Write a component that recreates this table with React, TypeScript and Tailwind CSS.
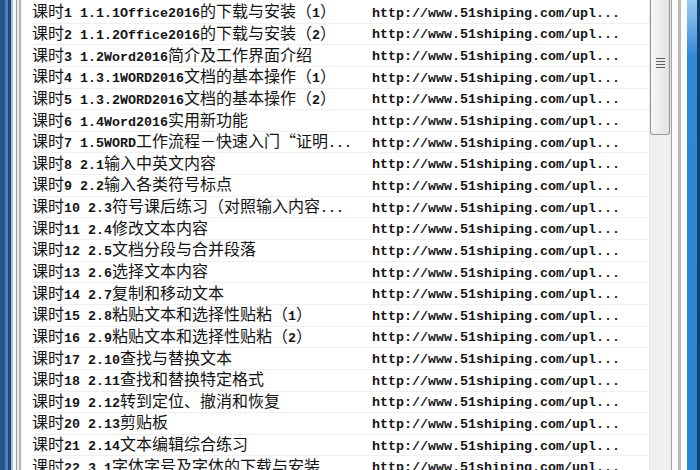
import React from 'react';

const URL = 'http://www.51shiping.com/upl...';

const lessons: string[] = [
  '课时1 1.1.1Office2016的下载与安装（1）',
  '课时2 1.1.2Office2016的下载与安装（2）',
  '课时3 1.2Word2016简介及工作界面介绍',
  '课时4 1.3.1WORD2016文档的基本操作（1）',
  '课时5 1.3.2WORD2016文档的基本操作（2）',
  '课时6 1.4Word2016实用新功能',
  '课时7 1.5WORD工作流程－快速入门“证明...',
  '课时8 2.1输入中英文内容',
  '课时9 2.2输入各类符号标点',
  '课时10 2.3符号课后练习（对照输入内容...',
  '课时11 2.4修改文本内容',
  '课时12 2.5文档分段与合并段落',
  '课时13 2.6选择文本内容',
  '课时14 2.7复制和移动文本',
  '课时15 2.8粘贴文本和选择性贴粘（1）',
  '课时16 2.9粘贴文本和选择性贴粘（2）',
  '课时17 2.10查找与替换文本',
  '课时18 2.11查找和替换特定格式',
  '课时19 2.12转到定位、撤消和恢复',
  '课时20 2.13剪贴板',
  '课时21 2.14文本编辑综合练习',
  '课时22 3.1字体字号及字体的下载与安装',
];

// SimSun-ish: half width latin (8px), full width CJK (16px)
const Mixed: React.FC<{ text: string }> = ({ text }) => {
  const parts = text.match(/[\x00-\x7f]+|[^\x00-\x7f]+/g) || [];
  return (
    <>
      {parts.map((p, i) =>
        /^[\x00-\x7f]/.test(p) ? (
          <span key={i} className="font-['Liberation_Mono',monospace] font-bold text-[13.33px] leading-[16px] whitespace-pre">
            {p}
          </span>
        ) : (
          <span key={i} className="font-['Noto_Sans_CJK_SC',sans-serif] text-[16px] leading-[16px]">
            {p}
          </span>
        )
      )}
    </>
  );
};

const LeftFrame = () => (
  <div className="flex h-full shrink-0">
    <div className="w-[5px] bg-[#24558a]" />
    <div className="w-[3px] bg-[#4d80b3]" />
    <div className="w-[3px] bg-[#1b4676]" />
    <div className="w-[2px] bg-[#a8bfd6]" />
    <div className="w-[3px] bg-[#f3f5f7]" />
    <div className="w-[1px] bg-[#9ca1a6]" />
    <div className="w-[2px] bg-[#e9e9e9]" />
    <div className="w-[2px] bg-[#b4b4b4]" />
    <div className="w-[1px] bg-[#f4f4f4]" />
  </div>
);

const ScrollBar = () => (
  <div className="w-[21px] h-full shrink-0 flex flex-col bg-[#efefef] border-l border-[#e4e4e4]">
    <div className="h-[135px] w-[20px] rounded-b-[3px] border border-t-0 border-[#979797] bg-gradient-to-r from-[#f6f6f6] to-[#e2e2e2] flex flex-col items-center justify-center gap-[2px] pb-[8px]">
      <div className="w-[9px] h-[1px] bg-[#5e5e5e]" />
      <div className="w-[9px] h-[1px] bg-[#5e5e5e]" />
      <div className="w-[9px] h-[1px] bg-[#5e5e5e]" />
      <div className="w-[9px] h-[1px] bg-[#5e5e5e]" />
    </div>
  </div>
);

const RightFrame = () => (
  <div className="flex h-full shrink-0">
    <div className="w-[1px] bg-[#e8e8e8]" />
    <div className="w-[1px] bg-[#a3a3a3]" />
    <div className="w-[6px] bg-[#fbfbfb]" />
    <div className="w-[3px] bg-[#b8b8b8]" />
    <div className="w-[6px] bg-[#fafafa]" />
    <div className="w-[10px] bg-gradient-to-b from-[#9ccbf0] via-[#2f88d8] via-[12%] to-[#2a82d2]" />
    <div className="w-[3px] bg-[#11416f]" />
  </div>
);

export default function App() {
  return (
    <div className="w-[700px] h-[470px] overflow-hidden flex bg-white text-[#141414]">
      <LeftFrame />
      <div className="flex-1 h-full overflow-hidden pt-[2px] pl-[10px]">
        {lessons.map((t, i) => (
          <div
            key={i}
            className="h-[21.65px] flex items-center border-b border-[#f0f0f0] leading-[16px] whitespace-nowrap"
          >
            <div className="w-[340px] shrink-0">
              <Mixed text={t} />
            </div>
            <div>
              <Mixed text={URL} />
            </div>
          </div>
        ))}
      </div>
      <ScrollBar />
      <RightFrame />
    </div>
  );
}
